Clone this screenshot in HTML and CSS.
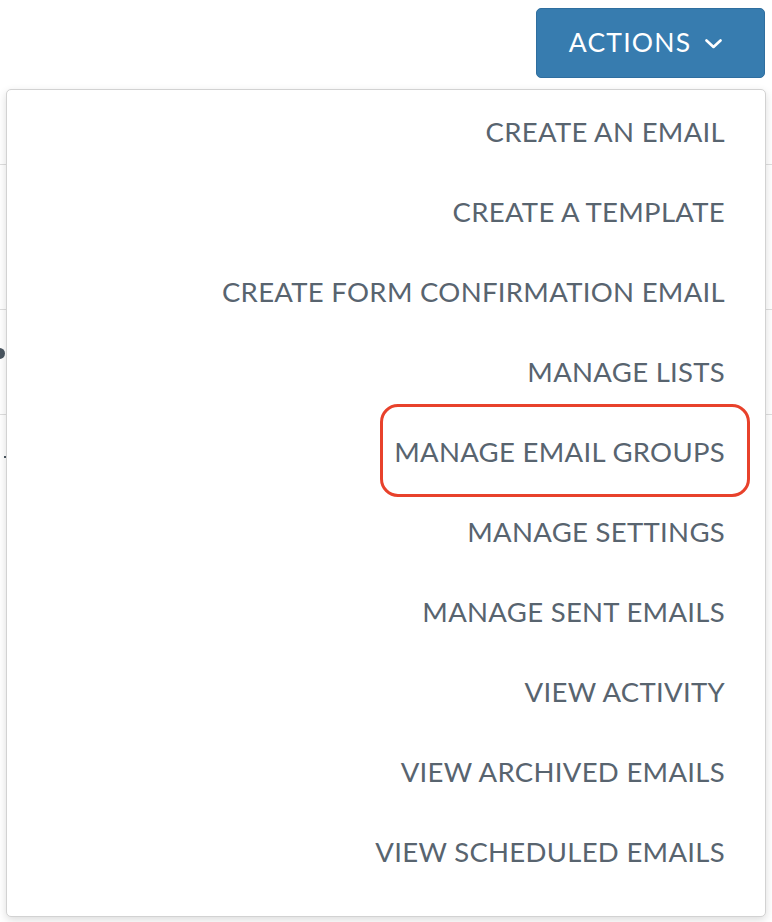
FILE: index.html
```html
<!DOCTYPE html>
<html>
<head>
<meta charset="utf-8">
<link rel="stylesheet" href="styles.css">
</head>
<body>
<div class="page">
  <div class="toolbar">
    <div class="dropdown">
      <button class="actions-btn">ACTIONS
        <svg class="chev" width="17" height="10" viewBox="0 0 17 10"><path d="M1.5 1.5 L8.5 8 L15.5 1.5" fill="none" stroke="#fff" stroke-width="2.6" stroke-linecap="round" stroke-linejoin="round"/></svg>
      </button>
      <ul class="menu">
        <li class="item">CREATE AN EMAIL</li>
        <li class="item">CREATE A TEMPLATE</li>
        <li class="item">CREATE FORM CONFIRMATION EMAIL</li>
        <li class="item">MANAGE LISTS</li>
        <li class="item highlighted">MANAGE EMAIL GROUPS<span class="ring"></span></li>
        <li class="item">MANAGE SETTINGS</li>
        <li class="item">MANAGE SENT EMAILS</li>
        <li class="item">VIEW ACTIVITY</li>
        <li class="item">VIEW ARCHIVED EMAILS</li>
        <li class="item">VIEW SCHEDULED EMAILS</li>
      </ul>
    </div>
  </div>
  <div class="table">
    <div class="row r1"></div>
    <div class="row r2"></div>
    <div class="row r3"><span class="dot"></span></div>
    <div class="row r4"><span class="mini"></span></div>
  </div>
</div>
</body>
</html>
```
FILE: styles.css
```css
html, body {
  margin: 0;
  padding: 0;
  background: #ffffff;
  font-family: Lato, "Open Sans", sans-serif;
}
.page {
  width: 772px;
  height: 922px;
  overflow: hidden;
  position: relative;
  background: #ffffff;
}
.toolbar {
  display: flex;
  justify-content: flex-end;
  padding: 8px 7px 0 0;
}
.dropdown {
  position: static;
}
.actions-btn {
  width: 229px;
  height: 70px;
  background: #377caf;
  border: 1px solid #2f6e9f;
  border-radius: 5px;
  color: #ffffff;
  font-family: Lato, "Open Sans", sans-serif;
  font-size: 26.5px;
  letter-spacing: 1.2px;
  display: flex;
  align-items: center;
  justify-content: center;
  gap: 14px;
  padding: 0 10px 2px 0;
  cursor: pointer;
}
.chev {
  margin-top: 3px;
}
.menu {
  position: absolute;
  z-index: 2;
  top: 89px;
  left: 6px;
  width: 758px;
  margin: 0;
  padding: 1px 0 25px;
  list-style: none;
  background: #ffffff;
  border: 1px solid #d2d2d2;
  border-radius: 5px;
  box-shadow: 0 3px 9px rgba(0, 0, 0, 0.14);
}
.item {
  height: 80px;
  display: flex;
  align-items: center;
  justify-content: flex-end;
  padding-right: 40px;
  font-size: 27.5px;
  color: #58646f;
  letter-spacing: 0.3px;
  position: relative;
}
.ring {
  position: absolute;
  left: 373px;
  right: 15px;
  top: -7px;
  height: 87px;
  border: 3.5px solid #e8412b;
  border-radius: 18px;
}
.row {
  border-bottom: 1px solid #dedede;
  position: relative;
}
.r1 { height: 86px; }
.r2 { height: 144px; }
.r3 { height: 104px; }
.r4 { height: 200px; border-bottom: none; }
.dot {
  position: absolute;
  left: -6px;
  top: 38px;
  width: 11px;
  height: 11px;
  border-radius: 50%;
  background: #4a5660;
}
.mini {
  position: absolute;
  left: 4px;
  top: 41px;
  width: 3px;
  height: 2px;
  background: #4a5660;
}
```
